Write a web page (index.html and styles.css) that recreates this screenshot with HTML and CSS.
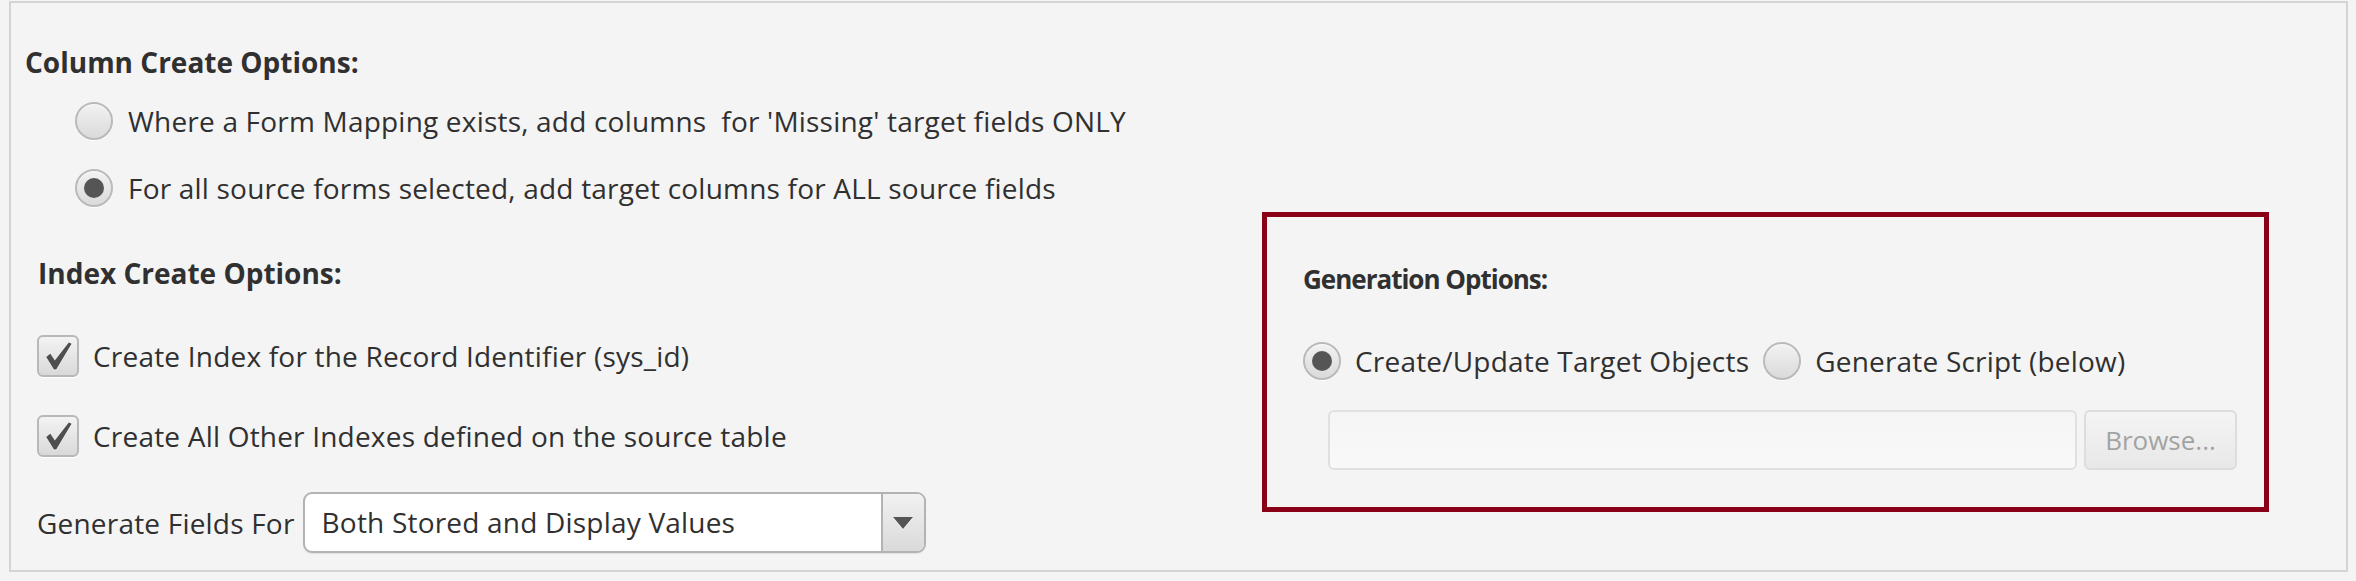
FILE: index.html
```html
<!DOCTYPE html>
<html>
    <head>
        <meta charset="utf-8">
        <title>Table Create Options</title>
        <link rel="stylesheet" href="styles.css">
    </head>
    <body>
        <div class="panel">
            <section class="options">
                <h3 class="heading">Column Create Options:</h3>
                <label class="radio-row">
                    <span class="radio"></span>
                    <span>Where a Form Mapping exists, add columns&nbsp; for 'Missing' target fields ONLY</span>
                </label>
                <label class="radio-row">
                    <span class="radio on"></span>
                    <span>For all source forms selected, add target columns for ALL source fields</span>
                </label>

                <h3 class="heading sub">Index Create Options:</h3>
                <label class="check-row">
                    <span class="check">
                        <svg viewBox="0 0 42 42" width="38" height="38">
                            <path class="tick-light" d="M8 23 L12.5 19.5 L17.5 27 L33 7 L36 8.5 L19 37 L16.5 37 Z"/>
                            <path class="tick" d="M8 22 L12.5 18.5 L17.5 26 L33 6 L36 7.5 L19 36 L16.5 36 Z"/>
                        </svg>
                    </span>
                    <span>Create Index for the Record Identifier (sys_id)</span>
                </label>
                <label class="check-row">
                    <span class="check">
                        <svg viewBox="0 0 42 42" width="38" height="38">
                            <path class="tick-light" d="M8 23 L12.5 19.5 L17.5 27 L33 7 L36 8.5 L19 37 L16.5 37 Z"/>
                            <path class="tick" d="M8 22 L12.5 18.5 L17.5 26 L33 6 L36 7.5 L19 36 L16.5 36 Z"/>
                        </svg>
                    </span>
                    <span>Create All Other Indexes defined on the source table</span>
                </label>

                <div class="fields-row">
                    <span>Generate Fields For</span>
                    <div class="combo">
                        <span class="combo-value">Both Stored and Display Values</span>
                        <span class="combo-arrow"><i></i></span>
                    </div>
                </div>
            </section>

            <section class="generation">
                <div class="gen-box">
                    <h3 class="heading gen">Generation Options:</h3>
                    <div class="gen-choices">
                        <label class="choice">
                            <span class="radio on"></span>
                            <span>Create/Update Target Objects</span>
                        </label>
                        <label class="choice">
                            <span class="radio"></span>
                            <span>Generate Script (below)</span>
                        </label>
                    </div>
                    <div class="script-row">
                        <div class="script-path"></div>
                        <button class="browse" disabled>Browse...</button>
                    </div>
                </div>
            </section>
        </div>
    </body>
</html>
```

FILE: styles.css
```css
body {
    margin: 0;
    background: #f4f4f4;
    color: #303030;
    font-family: "Open Sans", "Noto Sans", sans-serif;
    font-size: 28px;
    letter-spacing: 0.2px;
}

.panel {
    box-sizing: border-box;
    width: 2339px;
    height: 571px;
    margin: 1px 0 0 9px;
    border: 2px solid #d4d4d4;
    background: #f4f4f4;
    display: flex;
}

.options {
    width: 1251px;
    flex: none;
    display: flex;
    flex-direction: column;
    padding-left: 14px;
    box-sizing: border-box;
}

.heading {
    margin: 39px 0 0 0;
    height: 40px;
    line-height: 40px;
    font-size: 28px;
    font-weight: 700;
    letter-spacing: 0;
    color: #303030;
}
.heading.sub {
    margin-top: 32px;
    padding-left: 13px;
}
.heading.gen {
    font-size: 26px;
    letter-spacing: -1px;
}

/* radio buttons */
.radio-row {
    height: 67px;
    display: flex;
    align-items: center;
    gap: 15px;
    padding-left: 50px;
}
.radio-row:first-of-type { margin-top: 5px; }

.radio {
    box-sizing: border-box;
    width: 38px;
    height: 38px;
    flex: none;
    position: relative;
    border-radius: 50%;
    border: 2px solid #bababa;
    background: linear-gradient(#f2f2f2, #dadada);
    box-shadow: 0 1px 0 #ffffff, inset 0 1px 0 #fafafa;
}
.radio.on::after {
    content: '';
    position: absolute;
    top: 7px; left: 7px;
    width: 20px; height: 20px;
    border-radius: 50%;
    background: #555555;
}

/* checkboxes */
.check-row {
    height: 80px;
    display: flex;
    align-items: center;
    gap: 14px;
    padding-left: 12px;
}
.heading.sub + .check-row { margin-top: 23px; }

.check {
    box-sizing: border-box;
    width: 42px;
    height: 42px;
    flex: none;
    display: flex;
    align-items: center;
    justify-content: center;
    border-radius: 6px;
    border: 2px solid #b8b8b8;
    background: linear-gradient(#f3f3f3, #d9d9d9);
    box-shadow: 0 1px 0 #ffffff;
}
.tick { fill: #4f4f4f; }
.tick-light { fill: #ffffff; opacity: .8; }

/* generate fields combo */
.fields-row {
    margin-top: 16px;
    padding-left: 12px;
    height: 61px;
    display: flex;
    align-items: center;
    gap: 8px;
}
.combo {
    box-sizing: border-box;
    width: 623px;
    height: 61px;
    display: flex;
    border: 2px solid #b3b3b3;
    border-radius: 9px;
    background: #ffffff;
    overflow: hidden;
    box-shadow: 0 1px 1px #e2e2e2;
}
.combo-value {
    flex: 1;
    padding-left: 17px;
    line-height: 57px;
}
.combo-arrow {
    width: 41px;
    border-left: 2px solid #b3b3b3;
    background: linear-gradient(#f1f1f1, #dadada);
    display: flex;
    align-items: center;
    justify-content: center;
}
.combo-arrow i {
    width: 0; height: 0;
    border-left: 10px solid transparent;
    border-right: 10px solid transparent;
    border-top: 12px solid #555555;
    filter: drop-shadow(0 1px 0 #ffffff);
}

/* generation options box */
.generation {
    padding-top: 209px;
}
.gen-box {
    box-sizing: border-box;
    width: 1007px;
    height: 300px;
    border: 5px solid #8a0016;
    padding: 3px 27px 0 36px;
}
.gen-choices {
    margin-top: 42px;
    height: 40px;
    display: flex;
    align-items: center;
    gap: 14px;
}
.choice {
    display: flex;
    align-items: center;
    gap: 14px;
}
.script-row {
    margin: 29px 0 0 25px;
    display: flex;
    gap: 7px;
}
.script-path {
    box-sizing: border-box;
    width: 749px;
    height: 60px;
    border: 2px solid #e0e0e0;
    border-radius: 6px;
    background: linear-gradient(#f5f5f5, #f9f9f9);
}
.browse {
    box-sizing: border-box;
    width: 153px;
    height: 60px;
    border: 2px solid #dddddd;
    border-radius: 6px;
    background: linear-gradient(#f4f4f4, #e8e8e8);
    color: #a3a3a3;
    font-family: inherit;
    font-size: 26px;
    letter-spacing: 0;
    padding: 0;
}
```
